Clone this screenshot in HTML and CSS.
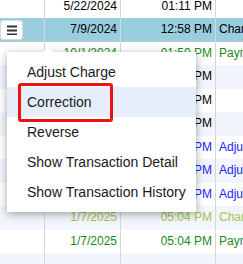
FILE: index.html
```html
<!DOCTYPE html>
<html lang="en">
<head>
    <meta charset="UTF-8">
    <title>Transactions</title>
    <link rel="stylesheet" href="styles.css">
</head>
<body>
    <div class="view">
        <div class="grid">
            <div class="row">
                <div class="cell"></div>
                <div class="cell num">5/22/2024</div>
                <div class="cell num">01:11 PM</div>
                <div class="cell"></div>
            </div>
            <div class="row selected">
                <div class="cell tool">
                    <button class="menu-btn" type="button">
                        <svg width="10" height="10" viewBox="0 0 10 10">
                            <rect x="0" y="0.5" width="10" height="2" fill="#333"/>
                            <rect x="0" y="4.5" width="10" height="2" fill="#333"/>
                            <rect x="0" y="8.5" width="10" height="2" fill="#333"/>
                        </svg>
                    </button>
                </div>
                <div class="cell num">7/9/2024</div>
                <div class="cell num">12:58 PM</div>
                <div class="cell">Charge</div>
            </div>
            <div class="row pay">
                <div class="cell"></div>
                <div class="cell num">10/1/2024</div>
                <div class="cell num">01:50 PM</div>
                <div class="cell">Payment</div>
            </div>
            <div class="row alt">
                <div class="cell"></div>
                <div class="cell num">10/1/2024</div>
                <div class="cell num">01:52 PM</div>
                <div class="cell"></div>
            </div>
            <div class="row">
                <div class="cell"></div>
                <div class="cell num">11/4/2024</div>
                <div class="cell num">09:30 PM</div>
                <div class="cell"></div>
            </div>
            <div class="row alt">
                <div class="cell"></div>
                <div class="cell num">12/2/2024</div>
                <div class="cell num">10:15 PM</div>
                <div class="cell"></div>
            </div>
            <div class="row adj">
                <div class="cell"></div>
                <div class="cell num">12/9/2024</div>
                <div class="cell num">02:40 PM</div>
                <div class="cell">Adjustment</div>
            </div>
            <div class="row alt adj">
                <div class="cell"></div>
                <div class="cell num">12/9/2024</div>
                <div class="cell num">02:41 PM</div>
                <div class="cell">Adjustment</div>
            </div>
            <div class="row adj">
                <div class="cell"></div>
                <div class="cell num">12/9/2024</div>
                <div class="cell num">02:42 PM</div>
                <div class="cell">Adjustment</div>
            </div>
            <div class="row alt charge">
                <div class="cell"></div>
                <div class="cell num">1/7/2025</div>
                <div class="cell num">05:04 PM</div>
                <div class="cell">Charge</div>
            </div>
            <div class="row pay">
                <div class="cell"></div>
                <div class="cell num">1/7/2025</div>
                <div class="cell num">05:04 PM</div>
                <div class="cell">Payment</div>
            </div>
            <div class="row alt">
                <div class="cell"></div>
                <div class="cell num"></div>
                <div class="cell num"></div>
                <div class="cell"></div>
            </div>
        </div>

        <div class="menu">
            <div class="menu-item">Adjust Charge</div>
            <div class="menu-item active">Correction</div>
            <div class="menu-item">Reverse</div>
            <div class="menu-item">Show Transaction Detail</div>
            <div class="menu-item">Show Transaction History</div>
        </div>
        <div class="mark"></div>
    </div>
</body>
</html>
```

FILE: styles.css
```css
body {
    margin: 0;
    font-family: "Liberation Sans", Arial, sans-serif;
    background: #fff;
}
.view {
    position: relative;
    width: 243px;
    height: 264px;
    overflow: hidden;
}
.grid {
    margin-top: -5.5px;
}
.row {
    display: grid;
    grid-template-columns: 45px 76px 95px 1fr;
    height: 23.5px;
    font-size: 12px;
    color: #000;
}
.row.alt {
    background-color: #f2f5fb;
}
.row.selected {
    background-color: #98cede;
    box-shadow: inset 0 -1px 0 #c4c4c4;
}
.row.pay {
    color: #1b8a1b;
}
.row.adj {
    color: #2222ff;
}
.row.charge {
    color: #9dc84e;
}
.cell {
    box-sizing: border-box;
    border-right: 1px solid #d6d6d6;
    line-height: 23.5px;
    padding: 0 3px;
    white-space: nowrap;
    overflow: hidden;
}
.cell:last-child {
    border-right: none;
}
.num {
    text-align: right;
}
.tool {
    padding: 0;
    display: flex;
    align-items: center;
}
.menu-btn {
    width: 23px;
    height: 20px;
    margin: 0;
    padding: 0;
    background: #fff;
    border: 1px solid #d8d8d8;
    border-radius: 3px;
    display: flex;
    align-items: center;
    justify-content: center;
    margin-top: 1px;
}
.menu {
    position: absolute;
    left: 7px;
    top: 52px;
    width: 189px;
    padding: 5px 0;
    background: #fff;
    box-shadow: 0 2px 8px rgba(0, 0, 0, 0.35);
}
.menu::before {
    content: "";
    position: absolute;
    left: 36px;
    top: -5px;
    border-left: 5px solid transparent;
    border-right: 5px solid transparent;
    border-bottom: 5px solid #fff;
}
.menu-item {
    height: 30px;
    line-height: 30px;
    padding-left: 20px;
    font-size: 14px;
    color: #1a1a1a;
    white-space: nowrap;
}
.menu-item.active {
    background-color: #e6eefb;
}
.mark {
    position: absolute;
    left: 18px;
    top: 83px;
    width: 95px;
    height: 39px;
    box-sizing: border-box;
    border: 3px solid #ee1111;
    border-radius: 3px;
}
```
